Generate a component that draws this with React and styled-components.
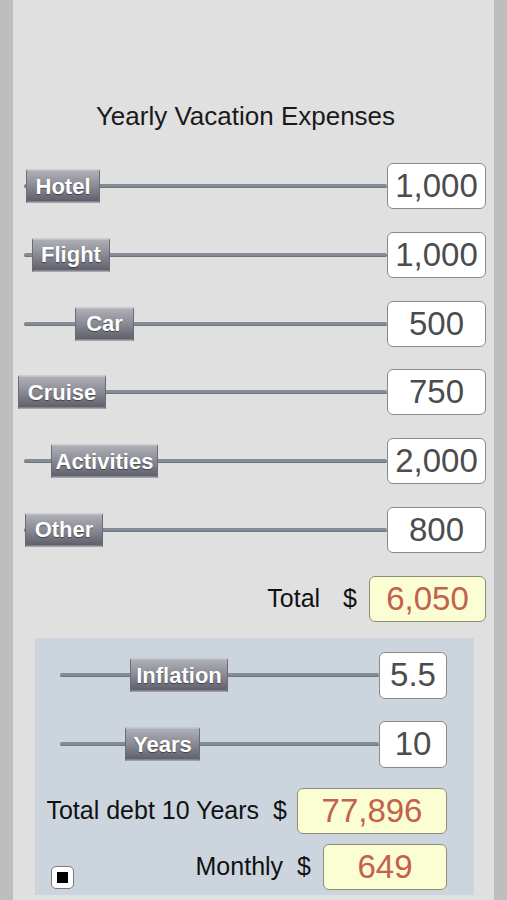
import React from 'react';
import styled, { createGlobalStyle } from 'styled-components';

const GlobalStyle = createGlobalStyle`
  html, body {
    margin: 0;
    padding: 0;
    background: #bebebe;
    font-family: "Liberation Sans", Arial, sans-serif;
  }
`;

const Screen = styled.div`
  width: 507px;
  height: 900px;
  overflow: hidden;
  background: #bebebe;
  padding: 0 13px;
  box-sizing: border-box;
`;

const Sheet = styled.div`
  height: 100%;
  background: #e0e0e0;
  display: flex;
  flex-direction: column;
`;

const Title = styled.div`
  padding: 101px 16px 0 0;
  line-height: 30px;
  text-align: center;
  font-size: 26px;
  color: #1a1a1a;
`;

const Rows = styled.div`
  display: flex;
  flex-direction: column;
  gap: 22.8px;
  padding: 32px 8px 0 11px;
`;

const Row = styled.div`
  display: flex;
  align-items: center;
  height: 46px;
`;

const Track = styled.div`
  position: relative;
  flex: 1;
  height: 4px;
  border-radius: 2px;
  background: #868c95;
  box-shadow: inset 0 -1px 0 #6f7580;
`;

const Thumb = styled.div`
  position: absolute;
  top: 50%;
  height: 33px;
  transform: translateY(-50%);
  box-sizing: border-box;
  display: flex;
  align-items: center;
  justify-content: center;
  background: linear-gradient(#afafb7 0%, #8e8e98 45%, #5f5f6b 100%);
  border: 1px solid #6c6c76;
  border-top-color: #b8b8bf;
  color: #fff;
  font-weight: bold;
  font-size: 22px;
  text-shadow: 0 1px 1px rgba(0, 0, 0, 0.45);
  white-space: nowrap;
`;

const ValueBox = styled.div`
  width: ${(p) => p.w}px;
  height: ${(p) => p.h || 46}px;
  box-sizing: border-box;
  border: 1.5px solid ${(p) => (p.result ? '#8e8e78' : '#8a8a8a')};
  border-radius: 6px;
  background: ${(p) => (p.result ? '#fbfdd2' : '#ffffff')};
  color: ${(p) => (p.result ? '#c4604e' : '#4c4c4c')};
  font-size: 33px;
  display: flex;
  align-items: center;
  justify-content: center;
  flex-shrink: 0;
`;

const TotalRow = styled(Row)`
  justify-content: flex-end;
`;

const Label = styled.span`
  font-size: 25px;
  color: #111;
  white-space: nowrap;
  flex-shrink: 0;
  margin-right: ${(p) => p.gap}px;
`;

const Panel = styled.div`
  margin: 16px 20px 0 22px;
  background: #ccd5de;
  padding: 14px 27px 5px 12px;
  display: flex;
  flex-direction: column;
`;

const PanelSlider = styled(Row)`
  height: 47px;
  padding-left: 13px;
  margin-bottom: ${(p) => p.mb}px;
`;

const ResultRow = styled(Row)`
  justify-content: flex-end;
  margin-bottom: ${(p) => p.mb || 0}px;
`;

const Check = styled.div`
  align-self: flex-end;
  margin: 0 auto 1px 4px;
  width: 23px;
  height: 23px;
  box-sizing: border-box;
  border: 1.5px solid #7a7a7a;
  border-radius: 5px;
  background: #fff;
  display: flex;
  align-items: center;
  justify-content: center;
  &::after {
    content: '';
    width: 11px;
    height: 11px;
    background: #000;
  }
`;

const expenses = [
  { name: 'Hotel', value: '1,000', left: 2, width: 74 },
  { name: 'Flight', value: '1,000', left: 8, width: 78 },
  { name: 'Car', value: '500', left: 51, width: 59 },
  { name: 'Cruise', value: '750', left: -6, width: 88 },
  { name: 'Activities', value: '2,000', left: 27, width: 107 },
  { name: 'Other', value: '800', left: 1, width: 78 },
];

const Slider = ({ name, left, width }) => (
  <Track>
    <Thumb style={{ left, width }}>{name}</Thumb>
  </Track>
);

export default function App() {
  return (
    <Screen>
      <GlobalStyle />
      <Sheet>
        <Title>Yearly Vacation Expenses</Title>
        <Rows>
          {expenses.map((e) => (
            <Row key={e.name}>
              <Slider {...e} />
              <ValueBox w={99}>{e.value}</ValueBox>
            </Row>
          ))}
          <TotalRow>
            <Label gap={23}>Total</Label>
            <Label gap={12}>$</Label>
            <ValueBox w={117} result>6,050</ValueBox>
          </TotalRow>
        </Rows>
        <Panel>
          <PanelSlider mb={22}>
            <Slider name="Inflation" left={70} width={98} />
            <ValueBox w={68} h={47}>5.5</ValueBox>
          </PanelSlider>
          <PanelSlider mb={20}>
            <Slider name="Years" left={65} width={75} />
            <ValueBox w={68} h={47}>10</ValueBox>
          </PanelSlider>
          <ResultRow mb={10}>
            <Label gap={14}>Total debt 10 Years</Label>
            <Label gap={10}>$</Label>
            <ValueBox w={150} result>77,896</ValueBox>
          </ResultRow>
          <ResultRow>
            <Check />
            <Label gap={14}>Monthly</Label>
            <Label gap={12}>$</Label>
            <ValueBox w={124} result>649</ValueBox>
          </ResultRow>
        </Panel>
      </Sheet>
    </Screen>
  );
}
